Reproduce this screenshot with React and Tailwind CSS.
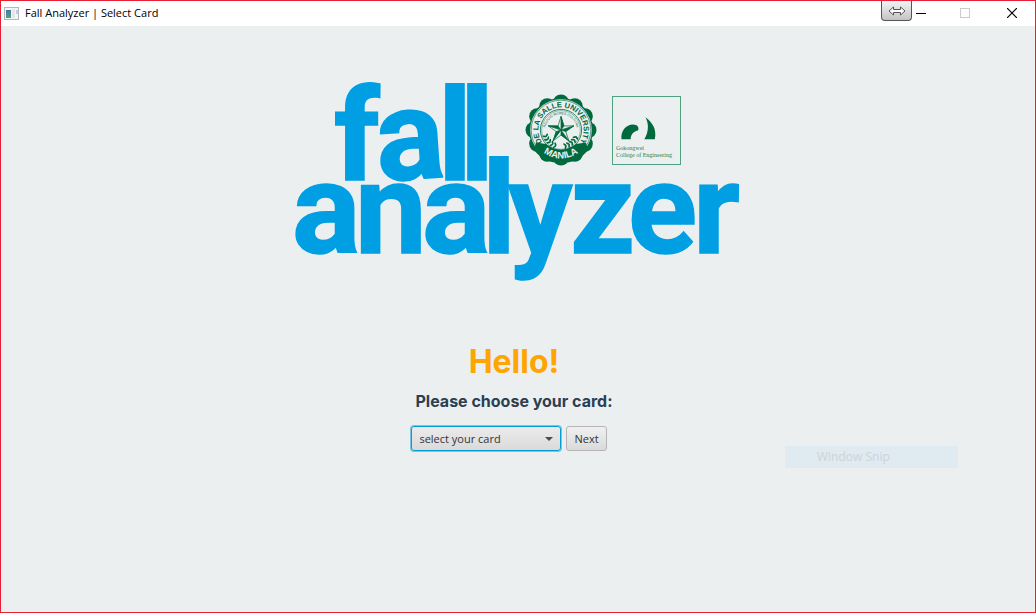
import React from "react";

const SCALLOPS = Array.from({ length: 12 }, (_, i) => (i * 30 * Math.PI) / 180);
const LEAVES = [24, 36, 48, 60, 72, 108, 120, 132, 144, 156];

function Wordmark() {
  return (
    <g
      fill="#009fe3"
      stroke="#009fe3"
      strokeWidth="1.5"
      fontFamily="Roboto, sans-serif"
      fontWeight="700"
      fontSize="128"
    >
      <text y="98" x="39">f</text>
      <text y="97.5" x="81" transform="rotate(-4 110 66)">a</text>
      <text y="97.5" x="143 165">ll</text>
      <text y="171" x="-3 60 127 187 213 275 333 398">analyzer</text>
    </g>
  );
}

function Star() {
  const pts = Array.from({ length: 10 }, (_, i) => {
    const a = -Math.PI / 2 + (i * Math.PI) / 5;
    const r = i % 2 ? 5 : 13.5;
    return [r * Math.cos(a), r * Math.sin(a)];
  });
  return (
    <g stroke="#00693e" strokeWidth="0.7" strokeLinejoin="round">
      <polygon points={pts.map((p) => p.join(",")).join(" ")} fill="#ebeff0" />
      {pts.map((p, i) =>
        i % 2 === 0 ? (
          <polygon key={i} points={`0,0 ${p.join(",")} ${pts[i + 1].join(",")}`} fill="#00693e" />
        ) : null
      )}
    </g>
  );
}

function Seal() {
  return (
    <g transform="translate(266 48)">
      <g fill="#00693e">
        <circle r="32" />
        {SCALLOPS.map((a, i) => (
          <circle key={i} cx={27.5 * Math.sin(a)} cy={-27.5 * Math.cos(a)} r="8" />
        ))}
      </g>
      <circle r="30.5" fill="#ebeff0" stroke="#ebeff0" strokeWidth="0.5" />
      <circle r="29.8" fill="none" stroke="#00693e" strokeWidth="0.6" />
      <circle r="20.6" fill="none" stroke="#00693e" strokeWidth="0.8" />
      <circle r="19.3" fill="none" stroke="#00693e" strokeWidth="0.4" />
      <path id="seal-top" d="M-20 10.5 A22.6 22.6 0 1 1 20 10.5" fill="none" />
      <text
        fill="#00693e"
        fontFamily="'Liberation Sans Narrow', 'Liberation Sans', sans-serif"
        fontWeight="700"
        fontSize="7.6"
      >
        <textPath href="#seal-top" startOffset="50%" textAnchor="middle">DE LA SALLE UNIVERSITY</textPath>
      </text>
      <path id="seal-motto" d="M-15 5 A15.8 15.8 0 1 1 15 5" fill="none" />
      <text fill="#00693e" fontFamily="'Liberation Sans', sans-serif" fontSize="3.4">
        <textPath href="#seal-motto" startOffset="50%" textAnchor="middle">RELIGIO MORES CULTURA</textPath>
      </text>
      <Star />
      <g fill="#00693e">
        {LEAVES.map((d) => (
          <g key={d} transform={`rotate(${d}) translate(16.5 0)`}>
            <ellipse cx="1.6" rx="2" ry="0.9" transform="rotate(35)" />
            <ellipse cx="-1.6" rx="2" ry="0.9" transform="rotate(-35)" />
          </g>
        ))}
      </g>
      <path
        d="M-25 12.5 L-15 14 Q0 25 15 14 L25 12.5 L27 20 Q17 33 0 33 Q-17 33 -27 20 Z"
        fill="#00693e"
      />
      <path id="seal-bottom" d="M-23 18.5 Q0 38.5 23 18.5" fill="none" />
      <text fill="#ebeff0" fontFamily="'Liberation Sans', sans-serif" fontWeight="700" fontSize="9.5">
        <textPath href="#seal-bottom" startOffset="50%" textAnchor="middle">MANILA</textPath>
      </text>
    </g>
  );
}

function CollegeMark() {
  return (
    <g transform="translate(317 14)">
      <rect x="0.5" y="0.5" width="68" height="68" fill="none" stroke="#4fa17f" strokeWidth="1" />
      <g fill="#00693e">
        <path d="M9.5 43.3 C8.5 35 14 28.5 21 28.5 C25.5 28.5 27.5 31.5 26 34.5 C22 35 18.5 38.5 18.7 43.3 Z" />
        <path d="M33.5 21.3 C40.5 26.5 45 33.5 42.8 43.3 H32.3 C36.8 36 37 28 33.5 21.3 Z" />
      </g>
      <g fill="#1f7f54" fontFamily="'Liberation Serif', serif" fontSize="6">
        <text x="4" y="54">Gokongwei</text>
        <text x="4" y="61">College of Engineering</text>
      </g>
    </g>
  );
}

function Logo() {
  return (
    <svg viewBox="0 0 446 200" className="h-[200px] w-[446px] overflow-visible" role="img" aria-label="fall analyzer">
      <Wordmark />
      <Seal />
      <CollegeMark />
    </svg>
  );
}

function AppIcon() {
  return (
    <svg viewBox="0 0 15 13" className="h-[13px] w-[15px]" aria-hidden="true">
      <defs>
        <linearGradient id="pane" x1="0" y1="0" x2="0" y2="1">
          <stop offset="0" stopColor="#4777a8" />
          <stop offset="1" stopColor="#56a577" />
        </linearGradient>
      </defs>
      <rect x="0.5" y="0.5" width="14" height="12" fill="#f4f5f6" stroke="#b5b8ba" />
      <rect x="2" y="3" width="5" height="8" fill="url(#pane)" />
      <rect x="8" y="2" width="3" height="9" fill="#e2e7ea" />
      <rect x="12" y="3" width="2" height="4" fill="#b9d0e4" />
    </svg>
  );
}

function TitleBar() {
  return (
    <header className="flex h-[25px] items-start bg-white pl-[3px]">
      <div className="flex h-6 items-center gap-[6px]">
        <AppIcon />
        <h1 className="text-[11px] leading-4 text-black">Fall Analyzer | Select Card</h1>
      </div>
      <div className="ml-auto flex h-full items-start">
        <button
          aria-label="Switch display"
          className="flex h-5 w-[31px] items-center justify-center rounded-b border border-t-0 border-[#555] bg-linear-to-b from-[#f4f4f4] to-[#c4c4c4]"
        >
          <svg viewBox="0 0 18 10" className="h-[10px] w-[18px]" aria-hidden="true">
            <path
              d="M1 5 L5.5 1 V3.5 H12.5 V1 L17 5 L12.5 9 V6.5 H5.5 V9 Z"
              fill="#fff"
              stroke="#555"
              strokeWidth="1"
            />
          </svg>
        </button>
        <button aria-label="Minimize" className="flex h-6 w-[18px] items-center justify-center">
          <svg viewBox="0 0 10 10" className="size-[10px]" aria-hidden="true">
            <path d="M0 5.5 H10" stroke="#000" />
          </svg>
        </button>
        <button aria-label="Maximize" disabled className="flex h-6 w-[70px] items-center justify-center">
          <svg viewBox="0 0 10 10" className="size-[10px]" aria-hidden="true">
            <rect x="0.5" y="0.5" width="9" height="9" fill="none" stroke="#ccc" />
          </svg>
        </button>
        <button aria-label="Close" className="mr-[11px] flex h-6 w-6 items-center justify-center">
          <svg viewBox="0 0 10 10" className="size-[10px]" aria-hidden="true">
            <path d="M0 0 L10 10 M10 0 L0 10" stroke="#000" strokeWidth="1.2" />
          </svg>
        </button>
      </div>
    </header>
  );
}

function CardForm() {
  return (
    <form className="flex flex-col items-center" onSubmit={(e) => e.preventDefault()}>
      <label htmlFor="card" className="font-[Inter,sans-serif] text-[16px] leading-6 font-bold text-[#2c3e50]">
        Please choose your card:
      </label>
      <div className="mt-[13px] mr-[10px] flex gap-[5px]">
        <div className="relative">
          <select
            id="card"
            className="block h-[25px] w-[150px] appearance-none rounded-[3px] border border-[#039ed3] bg-linear-to-b from-[#ebebeb] to-[#dadada] pl-[7px] text-[11px] leading-4 text-[#333] ring-1 ring-[#039ed3]/50 outline-none"
          >
            <option>select your card</option>
          </select>
          <svg
            viewBox="0 0 8 4"
            className="pointer-events-none absolute top-[11px] right-2 h-1 w-2"
            aria-hidden="true"
          >
            <path d="M0 0 H8 L4 4 Z" fill="#4c4c4c" />
          </svg>
        </div>
        <button className="h-[25px] rounded-[3px] border border-[#b5b5b5] bg-linear-to-b from-[#f0f0f0] to-[#dadada] px-[7px] text-[11px] leading-4 text-[#333]">
          Next
        </button>
      </div>
    </form>
  );
}

export default function App() {
  return (
    <div className="relative flex min-h-screen flex-col border border-[#e81f33] bg-[#ebeff0] font-['Open_Sans',sans-serif]">
      <TitleBar />
      <main className="flex flex-1 flex-col items-center pt-14">
        <Logo />
        <h2 className="mt-[60px] mr-2 font-[Inter,sans-serif] text-[32px] leading-10 font-bold text-[#ffa500]">
          Hello!
        </h2>
        <div className="mt-[7px] mr-2">
          <CardForm />
        </div>
      </main>
      <div className="absolute right-[77px] bottom-36 h-[22px] w-[173px] bg-[#dfeaf1] pl-8 text-[12px] leading-[22px] text-[#cdd4d8]">
        Window Snip
      </div>
    </div>
  );
}
